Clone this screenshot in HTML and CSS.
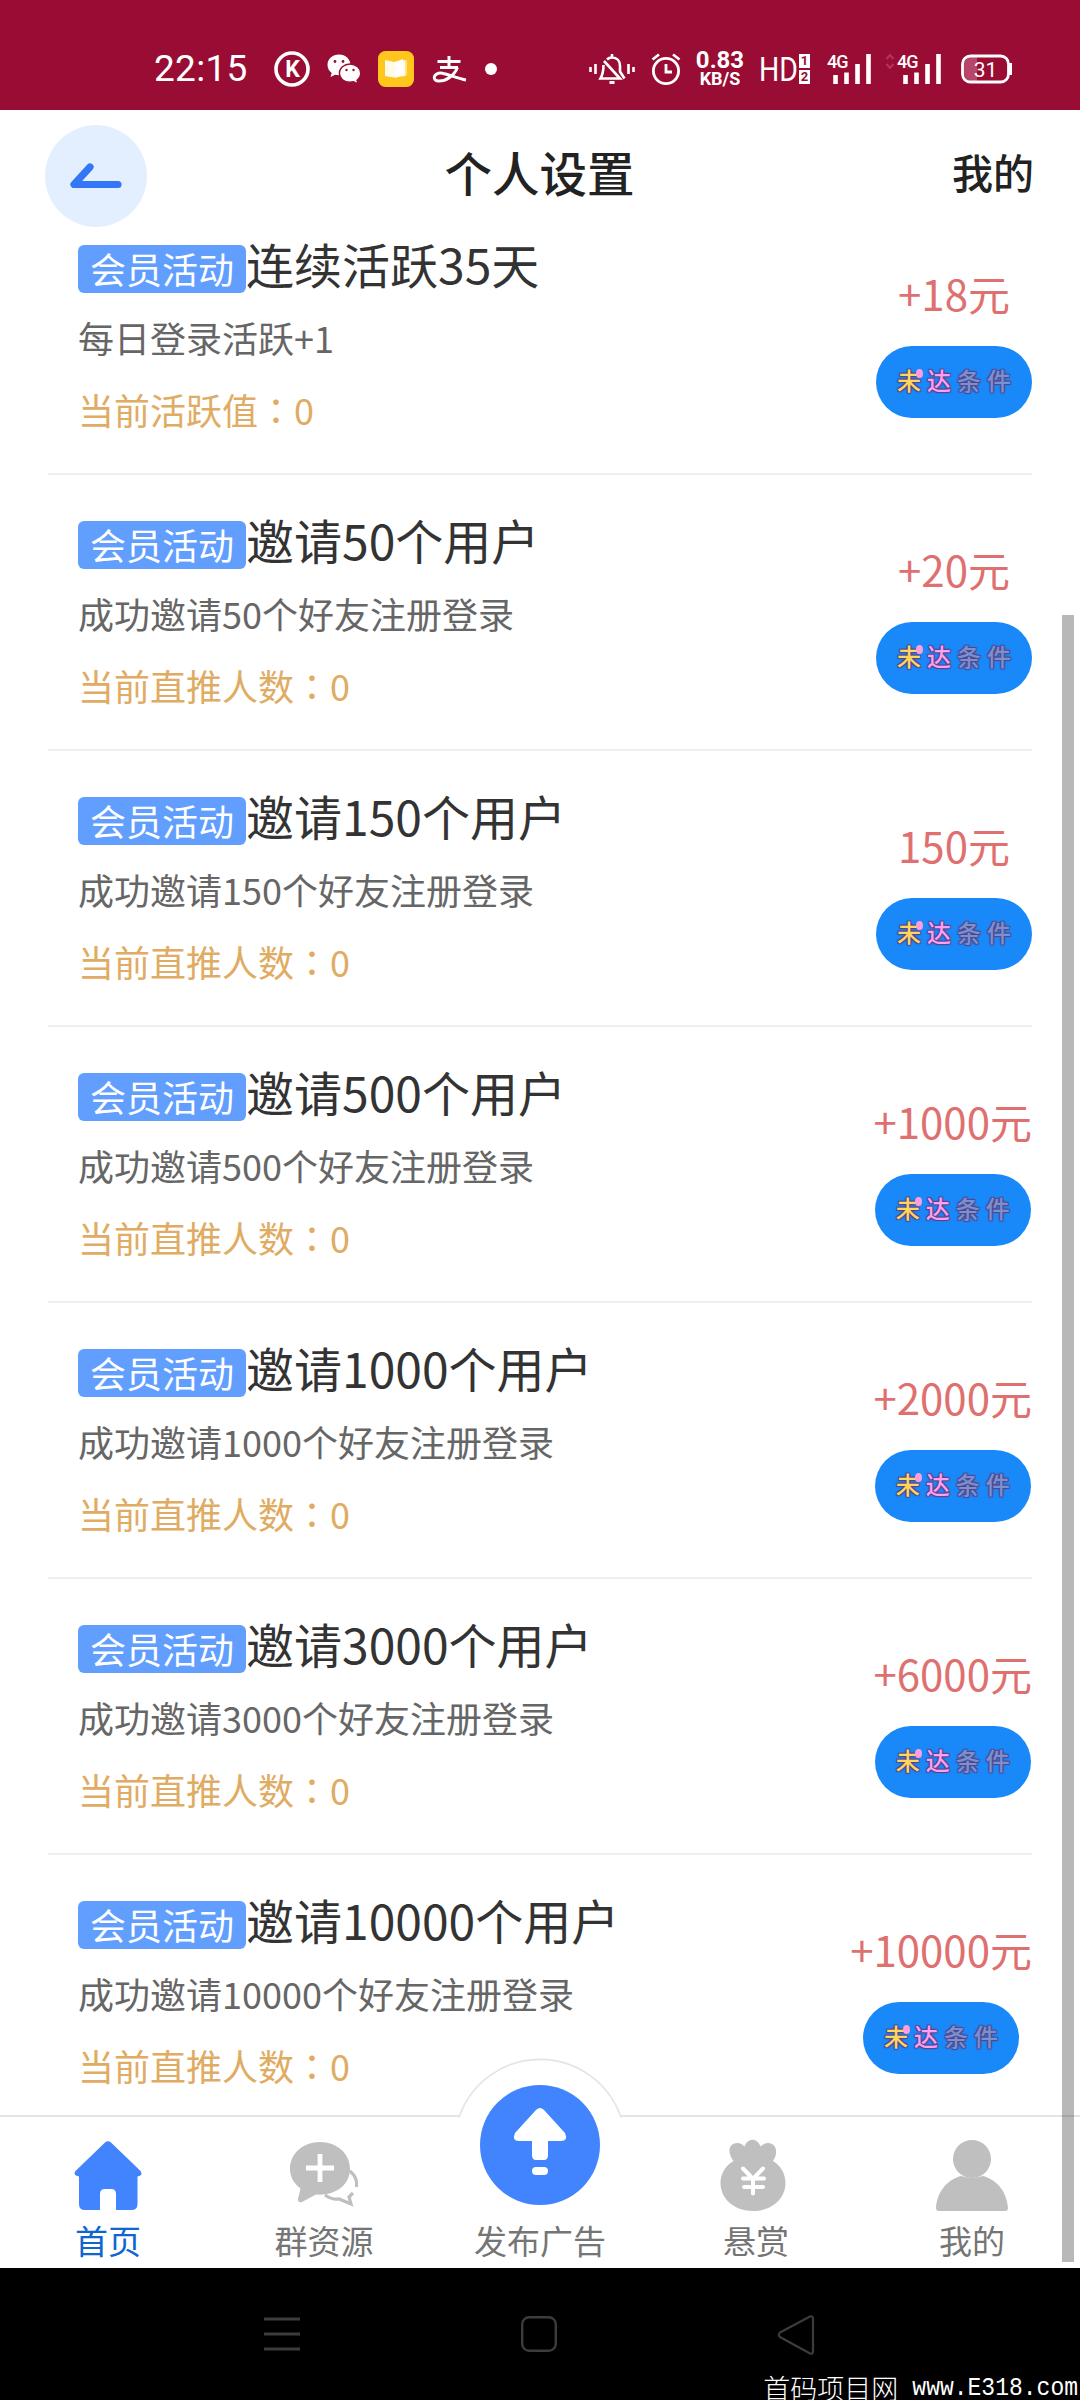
FILE: index.html
```html
<!DOCTYPE html>
<html lang="zh-CN">
<head>
<meta charset="utf-8">
<title>个人设置</title>
<link rel="stylesheet" href="styles.css">
</head>
<body>
<div class="screen">
  <div class="status">
    <span class="clock">22:15</span>
    <div class="notices">
      <svg width="36" height="38" viewBox="0 0 36 38"><circle cx="18" cy="19" r="16" fill="none" stroke="#fff" stroke-width="3.6"/><text x="18.500" y="27" class="k-letter">K</text></svg>
      <svg width="34" height="30" viewBox="0 0 34 30"><path fill="#fff" d="M12 .5C5.400.5.500 5 .500 11c0 3.300 1.600 6 4.200 8l-1.200 4 4.600-2.300c1.200.3 2.500.5 3.900.5 6.500 0 11.500-4.500 11.500-10.200S18.500.5 12 .5z"/><path fill="#fff" stroke="#990c33" stroke-width="1.400" d="M23 10c-6 0-10.600 4.100-10.600 9.200S17 28.300 23 28.300c1.200 0 2.400-.2 3.500-.5l4.500 2-1-3.600c2.300-1.700 3.700-4.200 3.700-7C33.700 14.100 29 10 23 10z"/><g fill="#990c33"><circle cx="8" cy="7.500" r="1.400"/><circle cx="16" cy="7.500" r="1.400"/><circle cx="19.500" cy="16" r="1.200"/><circle cx="26.500" cy="16" r="1.200"/></g></svg>
      <svg width="36" height="36" viewBox="0 0 36 36"><rect width="36" height="36" rx="7.500" fill="#ffc61e"/><path d="M7 9l9 2 11-2v16l-11 1.500L7 25z" fill="#fffbe8"/><path d="M17 11l8-3v16l-8 3z" fill="#fff"/><path d="M27 9l2 .5V24l-2 1z" fill="#ffe58a"/></svg>
      <svg class="pay" width="34" height="27" viewBox="0 0 34 27" fill="none" stroke="#fff" stroke-width="3"><path d="M4.500 5.500h23M16 0v11M7 11.500h18"/><path d="M24.500 11.500C21 20 13 25 6 25c-3.500 0-5-1.800-4.700-4 .4-2.800 4-4.500 8-3.700C16 18.600 25 22.500 33 24" /></svg>
      <i class="dot"></i>
    </div>
    <div class="system">
      <svg width="46" height="32" viewBox="0 0 46 32" fill="none" stroke="#fff" stroke-width="2.600"><path d="M1.500 14v5M6.500 11v10M39.500 11v10M44.500 14v5"/><path d="M18 6.500q2-2 5-2c5 0 8 3.500 8 8.500v5.500l4.500 7M23 1v3M14.500 12c0 5-.5 9-3 13.500H31L15 8"/><path d="M20.500 29.500h5" stroke-width="3"/></svg>
      <svg class="gap-a" width="30" height="32" viewBox="0 0 30 32" fill="none" stroke="#fff" stroke-width="2.800"><circle cx="15" cy="18" r="12.600"/><path d="M15 11v8h6M1.500 6.500L8 1.500M28.500 6.500L22 1.500"/></svg>
      <div class="speed"><b>0.83</b><small>KB/S</small></div>
      <div class="hd"><svg width="37" height="32" viewBox="0 0 37 32"><text x="-2" y="28" textLength="39" lengthAdjust="spacingAndGlyphs" class="hd-text">HD</text></svg><div><i>1</i><i>2</i></div></div>
      <svg class="gap-b" width="46" height="32" viewBox="0 0 46 32"><text x="1" y="15" class="net">4G</text><path d="M9.500 22v9M20.500 19.500V31M31.500 11v20M42.500 1v30" stroke="#fff" stroke-width="4.600"/></svg>
      <svg class="gap-c" width="57" height="32" viewBox="0 0 57 32"><path d="M1.500 6l3.500-4 3.500 4M1.500 11L5 15l3.500-4" fill="none" stroke="#b8325c" stroke-width="2"/><text x="12" y="15" class="net">4G</text><path d="M20.500 22v9M31.500 19.500V31M42.500 11v20M53.500 1v30" stroke="#fff" stroke-width="4.600"/></svg>
      <svg class="gap-d" width="52" height="30" viewBox="0 0 52 30"><path d="M11 3h5v24h-5a8 8 0 0 1-8-8v-8a8 8 0 0 1 8-8z" fill="#b8466a"/><rect x="1.500" y="2" width="46" height="26" rx="8" fill="none" stroke="#fff" stroke-width="2.800"/><path d="M49.500 9v12" stroke="#fff" stroke-width="3"/><text x="24.500" y="22.500" class="charge">31</text></svg>
    </div>
  </div>

  <header class="header">
    <div class="side"><div class="back"><svg width="52" height="26" viewBox="0 0 52 26" fill="none" stroke="#3377f6" stroke-width="7.200" stroke-linecap="round" stroke-linejoin="round"><path d="M20 4L4 21.500h44"/></svg></div></div>
    <h1>个人设置</h1>
    <div class="side mine">我的</div>
  </header>

  <main class="list">
    <section class="row"><div class="info"><h2><span class="badge">会员活动</span>连续活跃35天</h2><p>每日登录活跃+1</p><p class="now">当前活跃值<span class="colon" lang="zh-TW">：</span>0</p></div><div class="reward"><span class="price">+18元</span><div class="btn"><span class="c1">未</span><span class="c2">达</span><span class="c3">条</span><span class="c3">件</span></div></div></section>
    <section class="row"><div class="info"><h2><span class="badge">会员活动</span>邀请50个用户</h2><p>成功邀请50个好友注册登录</p><p class="now">当前直推人数<span class="colon" lang="zh-TW">：</span>0</p></div><div class="reward"><span class="price">+20元</span><div class="btn"><span class="c1">未</span><span class="c2">达</span><span class="c3">条</span><span class="c3">件</span></div></div></section>
    <section class="row"><div class="info"><h2><span class="badge">会员活动</span>邀请150个用户</h2><p>成功邀请150个好友注册登录</p><p class="now">当前直推人数<span class="colon" lang="zh-TW">：</span>0</p></div><div class="reward"><span class="price">150元</span><div class="btn"><span class="c1">未</span><span class="c2">达</span><span class="c3">条</span><span class="c3">件</span></div></div></section>
    <section class="row"><div class="info"><h2><span class="badge">会员活动</span>邀请500个用户</h2><p>成功邀请500个好友注册登录</p><p class="now">当前直推人数<span class="colon" lang="zh-TW">：</span>0</p></div><div class="reward"><span class="price">+1000元</span><div class="btn"><span class="c1">未</span><span class="c2">达</span><span class="c3">条</span><span class="c3">件</span></div></div></section>
    <section class="row"><div class="info"><h2><span class="badge">会员活动</span>邀请1000个用户</h2><p>成功邀请1000个好友注册登录</p><p class="now">当前直推人数<span class="colon" lang="zh-TW">：</span>0</p></div><div class="reward"><span class="price">+2000元</span><div class="btn"><span class="c1">未</span><span class="c2">达</span><span class="c3">条</span><span class="c3">件</span></div></div></section>
    <section class="row"><div class="info"><h2><span class="badge">会员活动</span>邀请3000个用户</h2><p>成功邀请3000个好友注册登录</p><p class="now">当前直推人数<span class="colon" lang="zh-TW">：</span>0</p></div><div class="reward"><span class="price">+6000元</span><div class="btn"><span class="c1">未</span><span class="c2">达</span><span class="c3">条</span><span class="c3">件</span></div></div></section>
    <section class="row"><div class="info"><h2><span class="badge">会员活动</span>邀请10000个用户</h2><p>成功邀请10000个好友注册登录</p><p class="now">当前直推人数<span class="colon" lang="zh-TW">：</span>0</p></div><div class="reward"><span class="price">+10000元</span><div class="btn"><span class="c1">未</span><span class="c2">达</span><span class="c3">条</span><span class="c3">件</span></div></div></section>
  </main>

  <nav class="tabs">
    <svg class="bump" width="166" height="64" viewBox="0 0 166 64"><path d="M2 60.500A85.500 85.500 0 0 1 164 60.500V64H2z" fill="#fff"/><path d="M2 60.500A85.500 85.500 0 0 1 164 60.500" fill="none" stroke="#e4e4e4" stroke-width="1.600"/></svg>
    <a class="tab active"><svg width="68" height="76" viewBox="0 0 68 76"><path fill="#4284fe" d="M31 4.500q3-2.500 6 0L66.500 33q3 4.500-3 5.500V66q0 6-6 6H42V56q0-5-5-5h-6q-5 0-5 5v16H11q-6 0-6-6V38.500q-6-1-4-5z"/></svg><span>首页</span></a>
    <a class="tab"><svg width="68" height="76" viewBox="0 0 68 76"><path fill="#bfbfbf" d="M30 4C13 4 0 15.500 0 31c0 8 4 14.500 10.500 19.500L8 61q0 4 4 3l14-7.500c20 1.500 34-10 34-25.500S47 4 30 4z"/><path d="M30 16v28M16 30h28" stroke="#fff" stroke-width="4.800"/><path d="M60 33q8 7 6.500 16M35 57q7 5 14 4l12 5-2-7 4-4" fill="none" stroke="#bfbfbf" stroke-width="3.200"/></svg><span>群资源</span></a>
    <a class="tab publish"><svg width="120" height="120" viewBox="0 0 120 120"><circle cx="60" cy="60" r="60" fill="#4284fe"/><path fill="#fff" d="M56 25q4-4 8 0l21 23q3.500 8-4 8H68v14q0 5-4 5h-8q-4 0-4-5V56H39q-7.500 0-4-8z"/><rect x="52" y="82" width="16" height="8" rx="4" fill="#fff"/></svg><span>发布广告</span></a>
    <a class="tab"><svg class="bag" width="68" height="76" viewBox="0 0 68 76"><path fill="#bfbfbf" d="M14.500 23C7.500 14 10 5 18.500 5q4 0 7 3.500C28.500-.5 38.500-.5 41.500 8.500Q45 5 49 5c8 0 11 9 5 18C62 28 66.500 36 66.500 45c0 16-14 28-32.500 28S1.500 61 1.500 45C1.500 36 6 28 14.500 23z"/><path d="M24 30.500L34 41l10-10.500M24 40.500h21M25 49h19M34 41v14.500" fill="none" stroke="#fff" stroke-width="4" stroke-linecap="round"/></svg><span>悬赏</span></a>
    <a class="tab"><svg width="72" height="76" viewBox="0 0 72 76"><circle cx="36" cy="21" r="19" fill="#bfbfbf"/><path fill="#bfbfbf" d="M25 38q11 3.500 22 0c15 4 24 17 25 32q0 3-3 3H3q-3 0-3-3C1 55 10 42 25 38z"/></svg><span>我的</span></a>
  </nav>

  <footer class="keys">
    <svg width="36" height="40" viewBox="0 0 36 40"><path d="M0 5h36M0 20h36M0 35h36" stroke="#3c3c3c" stroke-width="2.800"/></svg>
    <svg width="36" height="40" viewBox="0 0 36 40"><rect x="1.200" y="3.200" width="33.600" height="33.600" rx="7" fill="none" stroke="#3c3c3c" stroke-width="2.400"/></svg>
    <svg width="38" height="42" viewBox="0 0 38 42"><path d="M33 2.500L3 18.500q-2.500 2 0 4.500L33 39.500q3 1 3-2.500V5q0-3.500-3-2.500z" fill="none" stroke="#3c3c3c" stroke-width="2.200"/></svg>
    <div class="mark"><span class="mark-cn">首码项目网</span><span class="mark-url">www.E318.com</span></div>
  </footer>
  <i class="scrollbar"></i>
</div>
</body>
</html>
```
FILE: styles.css
```css
* { box-sizing: border-box; margin: 0; padding: 0; }
body { background: #fff; font-family: "Noto Sans CJK SC", sans-serif; }
svg { display: block; flex: none; overflow: visible; }
i { font-style: normal; }
.screen { position: relative; width: 1080px; height: 2400px; display: flex; flex-direction: column; overflow: hidden; }

.status { height: 110px; flex: none; background: #990c33; color: #fff; display: flex; align-items: center; padding: 28px 67px 0 154px; font-family: Roboto, sans-serif; }
.clock { width: 120px; font: 400 37px/40px Roboto, sans-serif; letter-spacing: .3px; }
.notices { display: flex; align-items: center; gap: 17px; }
.pay { margin: 0 1px 0 2px; }
.k-letter { font: 700 23px Roboto, sans-serif; fill: #fff; text-anchor: middle; }
.dot { width: 12px; height: 12px; border-radius: 50%; background: #fff; }
.system { display: flex; align-items: center; margin-left: auto; }
.gap-a { margin-left: 16px; }
.speed { margin-left: 15px; width: 48px; display: flex; flex-direction: column; align-items: center; }
.speed b { font: 700 24px/20px Roboto, sans-serif; }
.speed small { font: 700 18px/18px Roboto, sans-serif; }
.hd { margin-left: 17px; display: flex; align-items: center; }
.hd-text { font: 400 34px Roboto, sans-serif; fill: #fff; }
.hd div { display: grid; gap: 2px; margin-left: 1px; }
.hd i { width: 11px; height: 14px; background: #fff; color: #990c33; font: 700 13px/14px Roboto, sans-serif; text-align: center; }
.net { font: 500 18px Roboto, sans-serif; fill: #fff; letter-spacing: -1px; }
.gap-b { margin-left: 16px; }
.gap-c { margin-left: 13px; }
.gap-d { margin-left: 19px; }
.charge { font: 400 21px Roboto, sans-serif; fill: #fff; text-anchor: middle; }

.header { height: 129px; flex: none; display: flex; align-items: flex-start; justify-content: space-between; padding: 15px 46px 0 45px; color: #222; }
.side { width: 110px; }
.back { width: 102px; height: 102px; border-radius: 50%; background: #e3effe; display: flex; align-items: center; justify-content: center; }
.header h1 { font-size: 47.500px; font-weight: 500; line-height: 93px; }
.mine { font-size: 41px; font-weight: 500; line-height: 93px; text-align: right; }

.list { flex: 1; min-height: 0; overflow: hidden; margin-top: -20px; padding: 20px 48px 0; }
.row { display: flex; justify-content: space-between; height: 276px; padding: 40px 0 0 30px; border-bottom: 2px solid #efefef; }
.row:first-child { height: 236px; padding-top: 0; }
.row:last-child { border: 0; }
.row h2 { display: flex; height: 62px; font-size: 48px; font-weight: 400; line-height: 49px; color: #333; }
.badge { height: 48px; margin-top: 6px; padding: 0 12px; border-radius: 6px; background: #619efe; color: #fff; font-size: 36px; line-height: 47px; }
.row p { font-size: 36px; line-height: 72px; color: #666; }
.row .now { color: #e0ab62; }
.colon { font-family: "Noto Sans CJK TC", sans-serif; }
.reward { display: flex; flex-direction: column; align-items: center; padding-top: 24px; }
.price { font-size: 42px; line-height: 60px; color: #df7070; }
.btn { position: relative; display: flex; width: 156px; height: 72px; margin-top: 23px; padding: 0 18px; border-radius: 36px; background: #1989fa; font-size: 24px; font-weight: 500; line-height: 68px; }
.btn span { width: 30px; text-align: center; text-shadow: 1px 1px 1px #54468c, -1px -1px 1px #54468c, 1px -1px 1px #54468c, -1px 1px 1px #54468c; }
.btn .c1 { color: #ffd55c; }
.btn .c2 { color: #ff9df0; }
.btn .c3 { color: #7991cf; }
.btn::after { content: ""; position: absolute; left: 40px; top: 23px; width: 7px; height: 9px; border-radius: 50%; background: #ff9dde; }

.tabs { position: relative; height: 153px; flex: none; display: grid; grid-template-columns: repeat(5, 216px); background: #fff; border-top: 2px solid #e4e4e4; }
.tab { display: flex; flex-direction: column; align-items: center; padding-top: 21px; font-size: 33px; line-height: 50px; color: #757575; white-space: nowrap; }
.tab span { margin-top: 1px; }
.tab.active { color: #0f66d0; }
.bag { margin-right: 6px; }
.publish { position: relative; padding-top: 0; }
.publish svg { margin-top: -32px; }
.publish span { margin-top: 10px; }
.bump { position: absolute; left: 457px; top: -60px; }

.keys { position: relative; height: 132px; flex: none; display: flex; justify-content: space-between; align-items: flex-start; padding: 46px 265px 0 264px; background: #000; }
.mark { position: absolute; right: 2px; bottom: -1px; display: flex; gap: 14px; color: #fff; line-height: 26px; }
.mark-cn { font: 300 27px/26px "Noto Sans CJK SC", sans-serif; }
.mark-url { font: 400 23px/26px "Liberation Mono", monospace; transform: scaleY(1.12); }
.scrollbar { position: absolute; left: 1062px; top: 615px; width: 12px; height: 1647px; background: rgba(0, 0, 0, .28); }
```
